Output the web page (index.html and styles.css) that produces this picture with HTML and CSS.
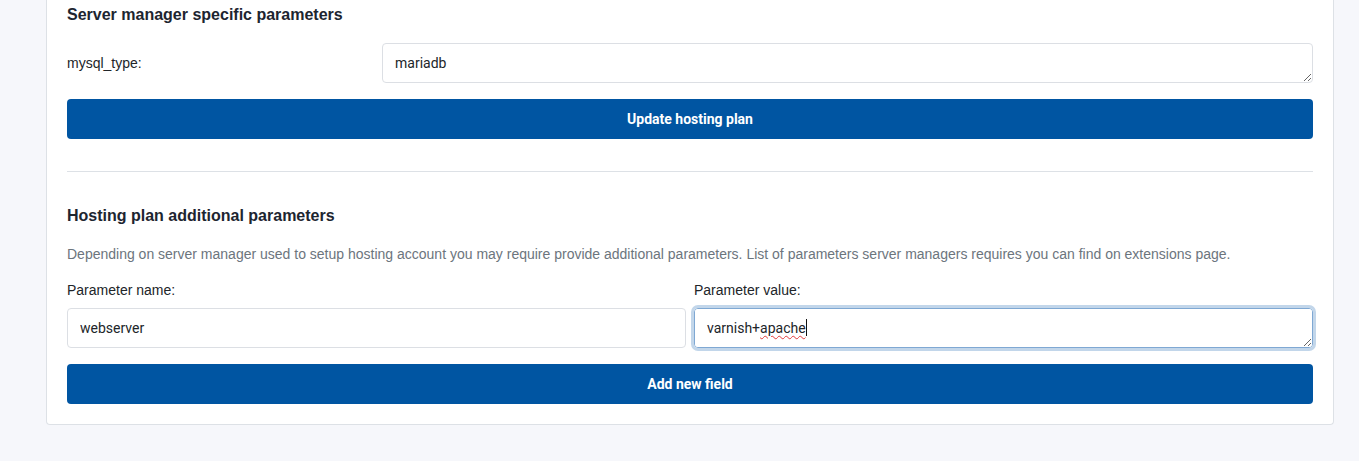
FILE: index.html
```html
<!DOCTYPE html>
<html>
<head>
<meta charset="utf-8">
<link rel="stylesheet" href="styles.css">
</head>
<body>
<div class="card">
  <h3 class="section-title">Server manager specific parameters</h3>
  <div class="param-row">
    <label class="param-label">mysql_type:</label>
    <textarea class="field" rows="1">mariadb</textarea>
  </div>
  <button class="btn">Update hosting plan</button>
  <hr class="divider">
  <h3 class="section-title second">Hosting plan additional parameters</h3>
  <p class="desc">Depending on server manager used to setup hosting account you may require provide additional parameters. List of parameters server managers requires you can find on extensions page.</p>
  <div class="two-col">
    <div class="col">
      <label class="col-label">Parameter name:</label>
      <input class="field" type="text" value="webserver">
    </div>
    <div class="col">
      <label class="col-label">Parameter value:</label>
      <div class="field focused">varnish+<span class="spell">apache</span><span class="caret"></span></div>
    </div>
  </div>
  <button class="btn">Add new field</button>
</div>
</body>
</html>
```
FILE: styles.css
```css
html, body {
  margin: 0;
  padding: 0;
  background: #f6f7fb;
  font-family: "Liberation Sans", Arial, sans-serif;
  color: #212529;
}
.card {
  margin: 0 25px 0 46px;
  background: #fff;
  border: 1px solid #dde1e6;
  border-top: none;
  border-radius: 0 0 4px 4px;
  padding: 5px 20px 20px 20px;
}
.section-title {
  margin: 0;
  font-size: 16px;
  line-height: 20px;
  font-weight: 700;
  color: #1d2530;
}
.section-title.second {
  margin-top: 34px;
}
.param-row {
  display: flex;
  align-items: center;
  margin-top: 18px;
}
.param-label {
  width: 315px;
  flex: none;
  font-size: 14px;
  color: #212529;
}
.field {
  display: block;
  box-sizing: border-box;
  width: 100%;
  height: 40px;
  margin: 0;
  padding: 10px 12px;
  font-family: Roboto, "Liberation Sans", sans-serif;
  font-size: 14px;
  line-height: 19px;
  color: #212529;
  background: #fff;
  border: 1px solid #dcdfe4;
  border-radius: 4px;
  resize: vertical;
  overflow: hidden;
  outline: none;
}
.param-row .field {
  flex: 1;
}
.field.focused {
  border-color: #7fa8d3;
  box-shadow: 0 0 0 3px #c2d6ea;
  overflow: auto;
  white-space: nowrap;
}
.spell {
  text-decoration: underline wavy #e23a3a;
  text-decoration-thickness: 1px;
  text-underline-offset: 2px;
}
.caret {
  display: inline-block;
  width: 1px;
  height: 17px;
  background: #111;
  vertical-align: -3px;
}
.btn {
  display: block;
  width: 100%;
  height: 40px;
  margin-top: 16px;
  padding: 0;
  border: none;
  border-radius: 4px;
  background: #0055a2;
  color: #fff;
  font-family: Roboto, "Liberation Sans", sans-serif;
  font-size: 14px;
  font-weight: 700;
}
.divider {
  margin: 32px 0 0 0;
  border: none;
  border-top: 1px solid #dde1e6;
  height: 0;
}
.desc {
  margin: 18px 0 0 0;
  font-size: 14px;
  line-height: 20px;
  color: #6c757d;
}
.two-col {
  display: grid;
  grid-template-columns: 1fr 1fr;
  column-gap: 8px;
  margin-top: 16px;
}
.col-label {
  display: block;
  font-size: 14px;
  line-height: 20px;
  margin-bottom: 8px;
}
```
